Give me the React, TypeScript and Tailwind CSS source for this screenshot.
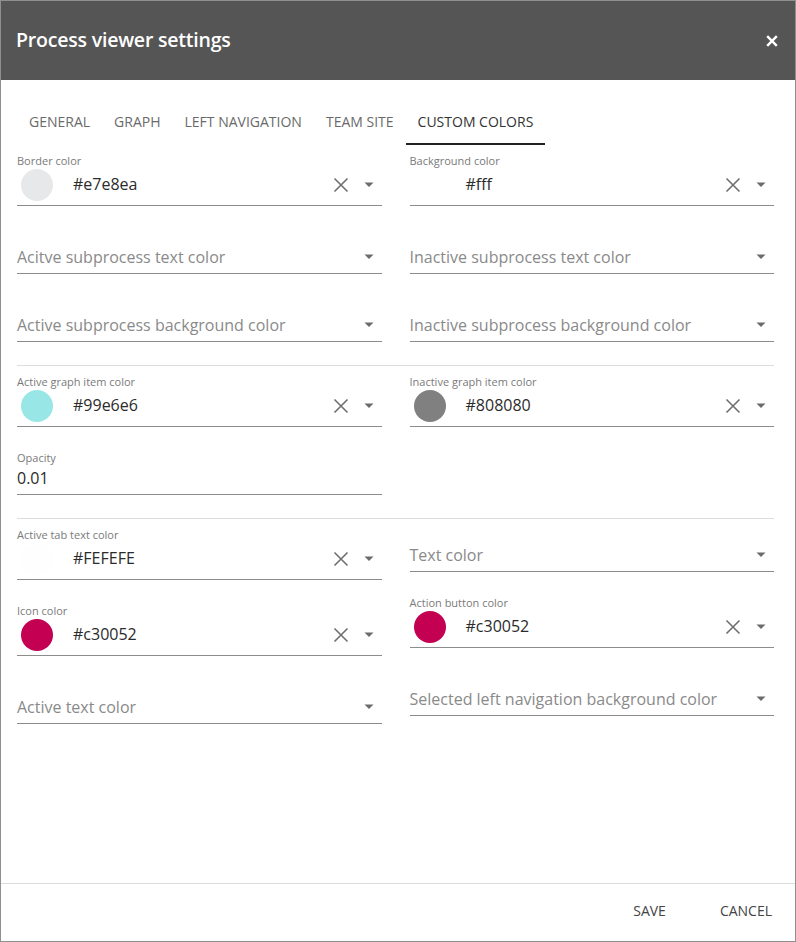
import type { ReactNode } from "react";

type ColorFieldProps = {
  label: string;
  value: string;
  swatch: string;
};

function Caret() {
  return (
    <svg width="10" height="6" viewBox="0 0 10 6" className="shrink-0">
      <path d="M0.5 0.5 L9.5 0.5 L5 5 Z" fill="#6b6b6b" />
    </svg>
  );
}

function ClearIcon() {
  return (
    <svg width="16" height="16" viewBox="0 0 16 16" className="shrink-0">
      <path
        d="M1.5 1.5 L14.5 14.5 M14.5 1.5 L1.5 14.5"
        stroke="#6f6f6f"
        strokeWidth="1.6"
        fill="none"
      />
    </svg>
  );
}

function FieldLabel({ children }: { children: ReactNode }) {
  return (
    <div className="h-[14px] text-[11px] leading-[11px] text-[#7a7a7a]">
      {children}
    </div>
  );
}

function ColorField({ label, value, swatch }: ColorFieldProps) {
  return (
    <div className="flex flex-col">
      <FieldLabel>{label}</FieldLabel>
      <div className="flex h-[37px] items-start border-b border-[#8c8c8c]">
        <div className="flex h-[32px] w-full items-center">
          <span
            className="ml-1 h-8 w-8 shrink-0 rounded-full"
            style={{ backgroundColor: swatch }}
          />
          <span className="ml-5 flex-1 pb-[3px] text-[16px] text-[#2b2b2b]">
            {value}
          </span>
          <ClearIcon />
          <span className="ml-[15px] mr-[8px]">
            <Caret />
          </span>
        </div>
      </div>
    </div>
  );
}

function EmptyField({ placeholder }: { placeholder: string }) {
  return (
    <div className="flex h-[43px] items-end border-b border-[#8c8c8c]">
      <div className="flex h-[32px] w-full items-center">
        <span className="flex-1 text-[16px] text-[#8a8a8a]">
          {placeholder}
        </span>
        <span className="mr-[8px]">
          <Caret />
        </span>
      </div>
    </div>
  );
}

function TextField({ label, value }: { label: string; value: string }) {
  return (
    <div className="flex flex-col">
      <FieldLabel>{label}</FieldLabel>
      <div className="flex h-[29px] items-start border-b border-[#8c8c8c]">
        <span className="flex h-6 items-center text-[16px] text-[#2b2b2b]">
          {value}
        </span>
      </div>
    </div>
  );
}

function Column({ children }: { children: ReactNode }) {
  return <div className="flex flex-col gap-[25px]">{children}</div>;
}

const tabs = ["General", "Graph", "Left navigation", "Team site", "Custom colors"];

export default function App() {
  return (
    <div
      className="flex h-[942px] w-[796px] flex-col border border-[#8f8f8f] bg-white"
      style={{ fontFamily: '"Open Sans", "Noto Sans", Arial, sans-serif' }}
    >
      <header className="flex h-[79px] shrink-0 items-center justify-between bg-[#555555] pb-[2px] pl-[15px] pr-[17px]">
        <h1 className="text-[19.5px] font-semibold tracking-[-0.2px] text-white">
          Process viewer settings
        </h1>
        <svg width="12" height="12" viewBox="0 0 12 12" className="mt-[2px]">
          <path
            d="M1.2 1.2 L10.8 10.8 M10.8 1.2 L1.2 10.8"
            stroke="#ffffff"
            strokeWidth="2.4"
            fill="none"
          />
        </svg>
      </header>

      <div className="flex flex-1 flex-col pl-4 pr-[21px]">
        <nav className="mt-[17px] flex h-[48px] shrink-0">
          {tabs.map((tab, i) => {
            const active = i === tabs.length - 1;
            return (
              <div
                key={tab}
                className={
                  active
                    ? "flex items-center border-b-2 border-[#222222] px-3 pt-[3px] text-[14px] uppercase text-[#333333]"
                    : "flex items-center border-b-2 border-transparent px-3 pt-[3px] text-[14px] uppercase text-[#6a6a6a]"
                }
              >
                {tab}
              </div>
            );
          })}
        </nav>

        <section className="grid grid-cols-2 gap-x-[28px] pt-[10px]">
          <Column>
            <ColorField label="Border color" value="#e7e8ea" swatch="#e7e8ea" />
            <EmptyField placeholder="Acitve subprocess text color" />
            <EmptyField placeholder="Active subprocess background color" />
          </Column>
          <Column>
            <ColorField label="Background color" value="#fff" swatch="#ffffff" />
            <EmptyField placeholder="Inactive subprocess text color" />
            <EmptyField placeholder="Inactive subprocess background color" />
          </Column>
        </section>

        <div className="mt-[23px] h-px bg-[#dddddd]" />

        <section className="grid grid-cols-2 gap-x-[28px] pt-[10px]">
          <Column>
            <ColorField
              label="Active graph item color"
              value="#99e6e6"
              swatch="#99e6e6"
            />
            <TextField label="Opacity" value="0.01" />
          </Column>
          <Column>
            <ColorField
              label="Inactive graph item color"
              value="#808080"
              swatch="#808080"
            />
          </Column>
        </section>

        <div className="mt-[23px] h-px bg-[#dddddd]" />

        <section className="grid grid-cols-2 gap-x-[28px] pt-[10px]">
          <Column>
            <ColorField
              label="Active tab text color"
              value="#FEFEFE"
              swatch="#FEFEFE"
            />
            <ColorField label="Icon color" value="#c30052" swatch="#c30052" />
            <EmptyField placeholder="Active text color" />
          </Column>
          <Column>
            <EmptyField placeholder="Text color" />
            <ColorField
              label="Action button color"
              value="#c30052"
              swatch="#c30052"
            />
            <EmptyField placeholder="Selected left navigation background color" />
          </Column>
        </section>
      </div>

      <footer className="flex h-[58px] shrink-0 items-center justify-end gap-[54px] border-t border-[#dcdcdc] pb-[4px] pr-[23px]">
        <button className="text-[14px] uppercase text-[#444444]">Save</button>
        <button className="text-[14px] uppercase text-[#444444]">Cancel</button>
      </footer>
    </div>
  );
}
